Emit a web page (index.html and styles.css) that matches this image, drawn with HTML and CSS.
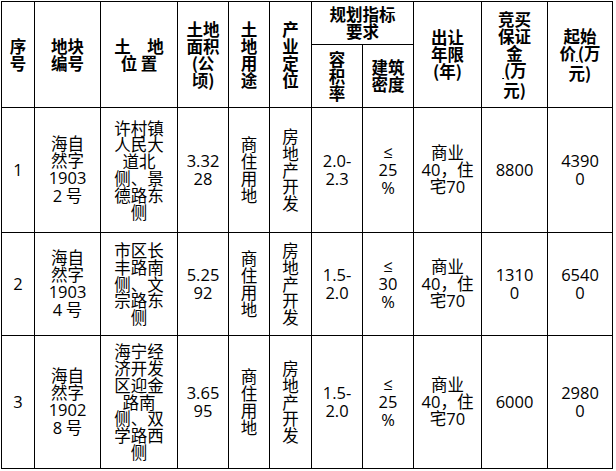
FILE: index.html
```html
<!DOCTYPE html>
<html lang="zh-CN">
<head>
<meta charset="utf-8">
<title>地块信息</title>
<link rel="stylesheet" href="styles.css">
</head>
<body>
<div class="sheet">
  <div class="c h r2"><p>序<br>号</p></div>
  <div class="c h r2"><p>地块<br>编号</p></div>
  <div class="c h r2"><p>土　地<br>位 置</p></div>
  <div class="c h r2"><p>土地<br>面积<br>(公<br>顷)</p></div>
  <div class="c h r2"><p>土<br>地<br>用<br>途</p></div>
  <div class="c h r2"><p>产<br>业<br>定<br>位</p></div>
  <div class="c h s2"><p>规划指标<br>要求</p></div>
  <div class="c h r2"><p>出让<br>年限<br>(年)</p></div>
  <div class="c h r2"><p>竞买<br>保证<br>金<br><span class="u">&nbsp;</span>(万<br>元)</p></div>
  <div class="c h r2"><p>起始<br>价<span class="u">&nbsp;</span>(万<br>元)</p></div>
  <div class="c h"><p>容<br>积<br>率</p></div>
  <div class="c h"><p>建筑<br>密度</p></div>

  <div class="c"><p><span class="n">1</span></p></div>
  <div class="c"><p>海自<br>然字<br><span class="n">1903</span><br><span class="n">2</span> 号</p></div>
  <div class="c"><p>许村镇<br>人民大<br>道北<br>侧、景<br>德路东<br>侧</p></div>
  <div class="c"><p><span class="n">3.32<br>28</span></p></div>
  <div class="c"><p>商<br>住<br>用<br>地</p></div>
  <div class="c"><p>房<br>地<br>产<br>开<br>发</p></div>
  <div class="c"><p><span class="n">2.0-<br>2.3</span></p></div>
  <div class="c"><p><span class="n">≤<br>25<br>%</span></p></div>
  <div class="c"><p>商业<br><span class="n">40</span>，住<br>宅<span class="n">70</span></p></div>
  <div class="c"><p><span class="n">8800</span></p></div>
  <div class="c"><p><span class="n">4390<br>0</span></p></div>

  <div class="c"><p><span class="n">2</span></p></div>
  <div class="c"><p>海自<br>然字<br><span class="n">1903</span><br><span class="n">4</span> 号</p></div>
  <div class="c"><p>市区长<br>丰路南<br>侧、文<br>宗路东<br>侧</p></div>
  <div class="c"><p><span class="n">5.25<br>92</span></p></div>
  <div class="c"><p>商<br>住<br>用<br>地</p></div>
  <div class="c"><p>房<br>地<br>产<br>开<br>发</p></div>
  <div class="c"><p><span class="n">1.5-<br>2.0</span></p></div>
  <div class="c"><p><span class="n">≤<br>30<br>%</span></p></div>
  <div class="c"><p>商业<br><span class="n">40</span>，住<br>宅<span class="n">70</span></p></div>
  <div class="c"><p><span class="n">1310<br>0</span></p></div>
  <div class="c"><p><span class="n">6540<br>0</span></p></div>

  <div class="c"><p><span class="n">3</span></p></div>
  <div class="c"><p>海自<br>然字<br><span class="n">1902</span><br><span class="n">8</span> 号</p></div>
  <div class="c"><p>海宁经<br>济开发<br>区迎金<br>路南<br>侧、双<br>学路西<br>侧</p></div>
  <div class="c"><p><span class="n">3.65<br>95</span></p></div>
  <div class="c"><p>商<br>住<br>用<br>地</p></div>
  <div class="c"><p>房<br>地<br>产<br>开<br>发</p></div>
  <div class="c"><p><span class="n">1.5-<br>2.0</span></p></div>
  <div class="c"><p><span class="n">≤<br>25<br>%</span></p></div>
  <div class="c"><p>商业<br><span class="n">40</span>，住<br>宅<span class="n">70</span></p></div>
  <div class="c"><p><span class="n">6000</span></p></div>
  <div class="c"><p><span class="n">2980<br>0</span></p></div>
</div>
</body>
</html>
```

FILE: styles.css
```css
html, body {
  margin: 0;
  padding: 0;
  background: #fff;
}

body {
  padding: 1px 0 0 1px;
}

.sheet {
  display: grid;
  grid-template-columns: 32px 65px 76px 50px 40px 41px 50px 50px 67px 65px 64px;
  grid-template-rows: 42px 62px 124px 102px 132px;
  gap: 1px;
  padding: 1px;
  background: #000;
  width: max-content;
}

.c {
  background: #fff;
  display: flex;
  align-items: center;
  justify-content: center;
  text-align: center;
  font-family: "Noto Sans CJK SC", sans-serif;
  font-size: 16.5px;
  line-height: 16.8px;
  color: #000;
}

.c p {
  margin: 0;
  white-space: nowrap;
}

.n {
  font-family: "Open Sans", "DejaVu Sans", "Noto Sans CJK SC", sans-serif;
}

.h {
  font-weight: 700;
  line-height: 17px;
}

.r2 {
  grid-row: span 2;
}

.s2 {
  grid-column: span 2;
}

.u {
  text-decoration: underline;
  font-size: 8px;
}
```
